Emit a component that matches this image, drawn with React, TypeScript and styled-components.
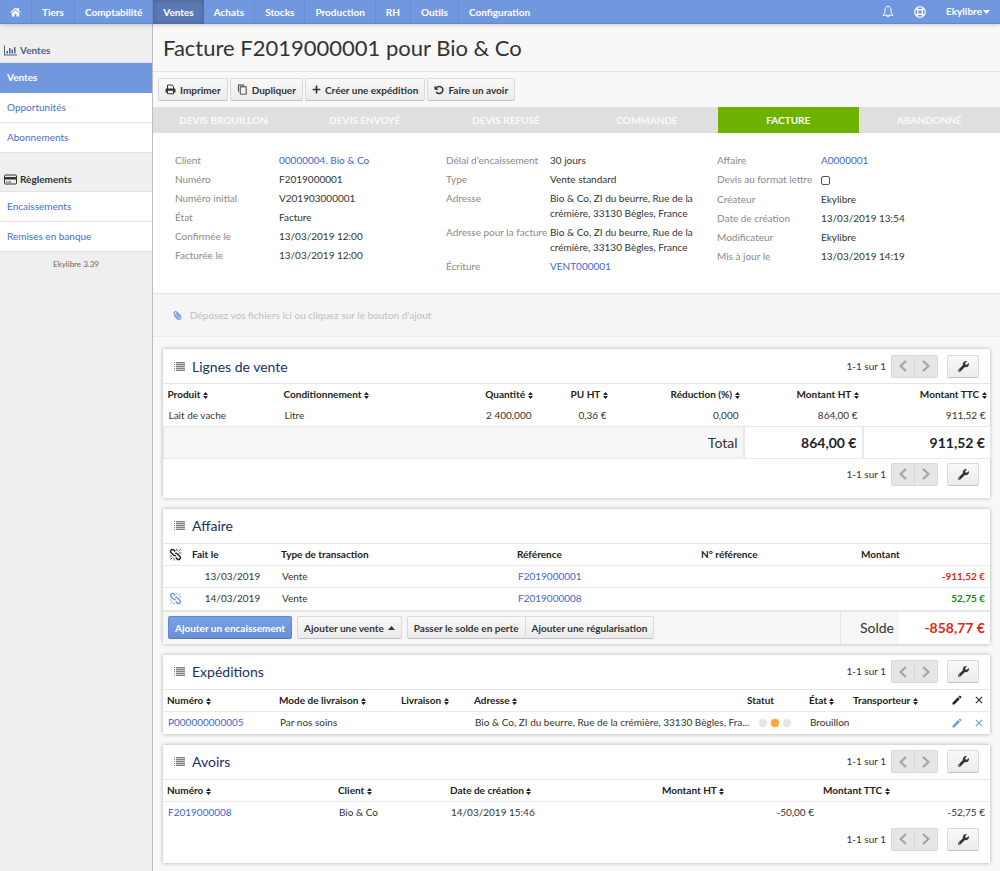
import React from 'react';
import styled, { createGlobalStyle, css } from 'styled-components';
import { FaWrench, FaPaperclip, FaPlus, FaRegLifeRing } from 'react-icons/fa';
import { MdEdit, MdClose, MdContentCopy } from 'react-icons/md';

const GlobalStyle = createGlobalStyle`
  *, *::before, *::after { box-sizing: border-box; }
  body {
    margin: 0;
    background: #f8f8f8;
    color: #333;
    font-family: Lato, "Liberation Sans", sans-serif;
    font-size: 10px;
    line-height: 15px;
  }
  a { text-decoration: none; }
  button { font-family: inherit; }
  h1, h2, h3, ul, dl, dd { margin: 0; padding: 0; }
`;

const Shell = styled.div`
  display: flex;
  flex-direction: column;
  min-height: 100vh;
`;

/* Top bar */
const TopBar = styled.nav`
  display: flex;
  height: 24px;
  background: #7198de;
  border-bottom: 1px solid #6288cc;
  box-shadow: 0 1px 4px rgba(0, 0, 0, 0.2);
  z-index: 1;
`;

const NavLink = styled.a<{ $active?: boolean }>`
  display: flex;
  align-items: center;
  padding: 0 10px;
  height: 24px;
  color: #fff;
  font-weight: 700;
  border-right: 1px solid #678dd4;
  ${p => p.$active && css`
    background: #5b7ab5;
    border-right: 0;
    box-shadow: inset 0 0 5px rgba(0, 0, 0, 0.25);
  `}
  &:last-of-type { border-right: 0; }
`;

const TopTools = styled.div`
  display: flex;
  align-items: center;
  gap: 20px;
  margin-left: auto;
  padding-right: 10px;
  color: #fff;
`;

const ToolLink = styled.a`
  display: flex;
  align-items: center;
  gap: 1px;
  color: #fff;
  font-weight: 700;
`;

const Body = styled.div`
  display: flex;
  flex: 1;
`;

/* Sidebar */
const Sidebar = styled.aside`
  flex: 0 0 153px;
  background: #efefef;
  border-right: 1px solid #bdbdbd;
`;

const SideTitle = styled.h2<{ $current?: boolean }>`
  display: flex;
  align-items: flex-end;
  gap: 3px;
  height: 39px;
  padding: 0 4px 4px;
  border-bottom: 1px solid #e2e2e2;
  font-size: 10px;
  line-height: 15px;
  color: ${p => (p.$current ? '#4d5f88' : '#333')};
  svg { margin-bottom: 2px; }
`;

const SideList = styled.ul`
  list-style: none;
`;

const SideLink = styled.a<{ $active?: boolean }>`
  display: flex;
  align-items: center;
  height: 30px;
  padding: 0 7px;
  background: ${p => (p.$active ? '#7198de' : '#fff')};
  color: ${p => (p.$active ? '#fff' : '#3d6fd0')};
  border-bottom: 1px solid ${p => (p.$active ? '#7198de' : '#e2e2e2')};
  font-weight: ${p => (p.$active ? 700 : 400)};
`;

const Version = styled.p`
  margin: 5px 0 0;
  font-size: 8px;
  text-align: center;
  color: #666;
`;

/* Main column */
const Main = styled.main`
  flex: 1;
  min-width: 0;
`;

const Title = styled.h1`
  padding: 10px;
  border-bottom: 1px solid #e4e4e4;
  font-size: 22px;
  line-height: 27px;
  font-weight: 400;
`;

const Toolbar = styled.div`
  display: flex;
  gap: 2px;
  padding: 6px 5px;
`;

const Button = styled.button<{ $primary?: boolean }>`
  display: inline-flex;
  align-items: center;
  gap: 4px;
  height: 23px;
  padding: 0 6px;
  border: 1px solid ${p => (p.$primary ? '#6288cc' : '#dadada')};
  border-bottom-color: ${p => (p.$primary ? '#5578b8' : '#c2c2c2')};
  border-radius: 2px;
  background: ${p =>
    p.$primary ? 'linear-gradient(#7aa0e4, #6890d8)' : 'linear-gradient(#f9f9f9, #ebebeb)'};
  color: ${p => (p.$primary ? '#fff' : '#333')};
  font-size: 10px;
  font-weight: 700;
  white-space: nowrap;
`;

const Steps = styled.ul`
  display: grid;
  grid-template-columns: repeat(6, 1fr);
  list-style: none;
`;

const Step = styled.li<{ $current?: boolean }>`
  padding: 6px 0 5px;
  text-align: center;
  font-weight: 700;
  text-transform: uppercase;
  background: ${p => (p.$current ? '#6eb200' : '#dfdfdf')};
  color: ${p => (p.$current ? '#fff' : '#fafafa')};
`;

const Info = styled.section`
  display: grid;
  grid-template-columns: repeat(3, 1fr);
  padding: 20px 12px 19px 22px;
  background: #fff;
`;

const InfoList = styled.dl`
  display: flex;
  flex-direction: column;
  gap: 4px;
`;

const InfoRow = styled.div`
  display: grid;
  grid-template-columns: 104px 1fr;
  dt { color: #8a8a8a; white-space: nowrap; }
`;

const TextLink = styled.a`
  color: #4466d0;
`;

const IconLink = styled.a`
  color: #7198de;
`;

const CheckBox = styled.input`
  appearance: none;
  display: block;
  width: 9px;
  height: 9px;
  margin: 4px 0 3px;
  border: 1px solid #555;
  border-radius: 2px;
  background: #fff;
`;

const DropZone = styled.section`
  display: flex;
  align-items: center;
  gap: 8px;
  height: 44px;
  padding: 0 20px;
  border-top: 1px solid #e4e4e4;
  border-bottom: 1px solid #ececec;
  background: #f5f5f5;
  color: #bdbdbd;
  svg { color: #7198de; transform: scaleX(-1); }
`;

/* Cards */
const Cards = styled.div`
  display: flex;
  flex-direction: column;
  gap: 11px;
  padding: 12px 10px 8px;
`;

const Card = styled.section`
  background: #fff;
  box-shadow: 0 0 4px rgba(0, 0, 0, 0.3);
`;

const CardHead = styled.header`
  display: flex;
  align-items: center;
  height: 35px;
  padding: 0 11px;
  border-bottom: 1px solid #e4e4e4;
`;

const CardTitle = styled.h3`
  margin-left: 7px;
  font-size: 14px;
  font-weight: 400;
  color: #1c2f66;
`;

const CardFoot = styled.footer`
  display: flex;
  padding: 4px 11px 12px;
`;

const PagerBox = styled.div`
  display: flex;
  align-items: center;
  margin-left: auto;
`;

const PagerGroup = styled.div`
  display: flex;
  margin: 0 9px 0 5px;
`;

const PagerButton = styled.button`
  display: flex;
  align-items: center;
  justify-content: center;
  width: 24px;
  height: 23px;
  padding: 0;
  border: 1px solid #d8d8d8;
  background: #e6e6e6;
  color: #a2a2a2;
  &:first-child { border-radius: 2px 0 0 2px; }
  &:last-child { width: 23px; border-left: 0; border-radius: 0 2px 2px 0; }
`;

const ToolButton = styled(Button)`
  justify-content: center;
  width: 32px;
`;

const Table = styled.table<{ $rowHeight?: number }>`
  width: 100%;
  table-layout: fixed;
  border-collapse: collapse;
  th, tbody td { height: ${p => p.$rowHeight ?? 22}px; }
`;

type Align = 'left' | 'right' | 'center';

const Th = styled.th<{ $w: number; $align?: Align }>`
  width: ${p => p.$w}px;
  padding: 0 4px;
  text-align: ${p => p.$align ?? 'left'};
  font-weight: 700;
  white-space: nowrap;
  color: #222;
  svg { vertical-align: middle; }
`;

const IconTh = styled(Th)`
  padding: 0;
  text-align: center;
  svg { display: block; margin: 0 auto; }
`;

const Row = styled.tr`
  border-top: 1px solid #ececec;
`;

const PlainRow = styled.tr``;

const Td = styled.td<{ $align?: Align; $tone?: 'neg' | 'pos' }>`
  padding: 0 5px;
  text-align: ${p => p.$align ?? 'left'};
  white-space: nowrap;
  ${p => p.$tone && css`
    font-weight: 700;
    color: ${p.$tone === 'neg' ? '#e02a10' : '#118411'};
  `}
`;

const IconTd = styled.td`
  padding: 0;
  text-align: center;
  svg { display: block; margin: 0 auto; }
`;

const TotalRow = styled.tr`
  border: 1px solid #e9e9e9;
  td {
    height: 32px;
    padding: 0 5px;
    font-size: 14px;
    text-align: right;
    white-space: nowrap;
    border-left: 2px solid #e9e9e9;
    font-weight: 700;
    color: #222;
  }
  td:first-child { background: #f6f6f6; font-weight: 400; color: #333; border-left: 0; }
`;

const BalanceBar = styled.footer`
  display: flex;
  height: 34px;
  border-top: 2px solid #e6e6e6;
  background: #f6f6f6;
`;

const BalanceActions = styled.div`
  display: flex;
  flex: 1;
  align-items: center;
  gap: 5px;
  padding-left: 5px;
`;

const ButtonPair = styled.div`
  display: flex;
  button:first-child { border-radius: 2px 0 0 2px; }
  button:last-child { border-left: 0; border-radius: 0 2px 2px 0; }
`;

const BalanceLabel = styled.div`
  display: flex;
  align-items: center;
  justify-content: flex-end;
  width: 59px;
  padding-right: 5px;
  border-left: 1px solid #e6e6e6;
  font-size: 14px;
`;

const BalanceValue = styled.div`
  display: flex;
  align-items: center;
  justify-content: flex-end;
  width: 91px;
  padding-right: 5px;
  background: #fff;
  color: #e02a10;
  font-size: 14px;
  font-weight: 700;
`;

const Dots = styled.div`
  display: flex;
  justify-content: center;
  gap: 4px;
  padding-left: 2px;
`;

const Dot = styled.span<{ $on?: boolean }>`
  width: 8px;
  height: 8px;
  border-radius: 50%;
  background: ${p => (p.$on ? '#fda63a' : '#e6e6e6')};
  box-shadow: ${p => (p.$on ? '0 0 3px #fdc680' : 'none')};
`;

/* Icons */
const HomeIcon = () => (
  <svg width="11" height="10" viewBox="0 0 22 20" fill="#fff" aria-hidden="true">
    <path d="M11 1 0.5 10l1.5 1.7L11 4l9 7.7 1.5-1.7-3.5-3V2h-3v2.4z" />
    <path d="M11 6l-7.5 6.4V19h5.500v-5h4v5h5.500v-6.600z" />
  </svg>
);
const BellIcon = () => (
  <svg width="12" height="13" viewBox="0 0 24 26" fill="none" stroke="#fff" strokeWidth="1.9" aria-hidden="true">
    <path d="M12 3c-4.500 0-6 3.500-6 7 0 6-2 8-4 10.500h20c-2-2.500-4-4.500-4-10.500 0-3.500-1.500-7-6-7z" strokeLinejoin="round" />
    <path d="M12 1v2M9.500 21c0 1.600 1 2.500 2.500 2.500s2.500-.9 2.500-2.500" />
  </svg>
);
const CaretDown = () => (
  <svg width="7" height="4" viewBox="0 0 7 4" fill="currentColor" aria-hidden="true"><path d="M0 0h7L3.500 4z" /></svg>
);
const CaretUp = () => (
  <svg width="7" height="4" viewBox="0 0 7 4" fill="currentColor" aria-hidden="true"><path d="M0 4h7L3.500 0z" /></svg>
);
const ChartIcon = () => (
  <svg width="13" height="11" viewBox="0 0 26 22" fill="currentColor" aria-hidden="true">
    <path d="M0 1h2v18h24v2H0zM5 12h3v5H5zM10 6h3v11h-3zM15 9h3v8h-3zM20 4h3v13h-3z" />
  </svg>
);
const CardIcon = () => (
  <svg width="13" height="11" viewBox="0 0 26 22" aria-hidden="true">
    <rect x="1" y="2" width="24" height="18" rx="2" fill="none" stroke="#333" strokeWidth="2" />
    <path d="M1 6h24v5H1zM4 15h3v2H4zM9 15h5v2H9z" fill="#333" />
  </svg>
);
const PrintIcon = () => (
  <svg width="11" height="11" viewBox="0 0 22 22" aria-hidden="true">
    <path d="M5 10V2h9l3 3v5" fill="none" stroke="#333" strokeWidth="2" />
    <path d="M1 11.500C1 10 2 9 3.500 9h15c1.500 0 2.500 1 2.500 2.500V17h-3.500v-3.500h-13V17H1z" fill="#333" />
    <path d="M5 13.500v6h12v-6" fill="none" stroke="#333" strokeWidth="2" />
  </svg>
);
const UndoIcon = () => (
  <svg width="10" height="10" viewBox="0 0 20 20" aria-hidden="true">
    <path d="M4 5.500C6 3.500 8 2.800 10.500 2.800a7.200 7.200 0 1 1-6 11.200" fill="none" stroke="#333" strokeWidth="3" />
    <path d="M1 1v8.500h8.500z" fill="#333" />
  </svg>
);
const UnlinkIcon = () => (
  <svg width="13" height="13" viewBox="0 0 26 26" fill="none" stroke="currentColor" aria-hidden="true">
    <path d="M12.500 7 10 4.300C8.300 2.600 6 2.600 4.400 4.100S2.700 7.800 4.400 9.500l5.200 5c1.400 1.200 2.900 1.300 4.300.4" strokeWidth="3" />
    <path d="M13.500 19l2.500 2.700c1.700 1.700 4 1.700 5.600.2s1.700-3.700 0-5.400l-5.200-5c-1.400-1.200-2.900-1.300-4.300-.4" strokeWidth="3" />
    <path d="M16 1v5M19 7l4.500-4.500M20 10h5M10 20v5M7 19l-4.500 4.500M6 16H1" strokeWidth="1.500" />
  </svg>
);
const ListIcon = () => (
  <svg width="11" height="9" viewBox="0 0 11 9" fill="#808080" aria-hidden="true">
    <path d="M0 0h1v1H0zM2 0h9v1H2zM0 2h1v1H0zM2 2h9v1H2zM0 4h1v1H0zM2 4h9v1H2zM0 6h1v1H0zM2 6h9v1H2zM0 8h1v1H0zM2 8h9v1H2z" />
    <path d="M2 0h9v9H2z" opacity="0.4" />
  </svg>
);
const SortIcon = () => (
  <svg width="5" height="7" viewBox="0 0 10 14" fill="#222" aria-hidden="true"><path d="M0 6l5-6 5 6zM0 8h10l-5 6z" /></svg>
);
const Chevron = ({ right }: { right?: boolean }) => (
  <svg width="8" height="12" viewBox="0 0 8 12" fill="none" stroke="currentColor" strokeWidth="2" aria-hidden="true">
    <path d={right ? 'M1 1l5.500 5L1 11' : 'M7 1L1.500 6 7 11'} />
  </svg>
);

const Sorted = ({ children }: { children: string }) => (
  <>{children} <SortIcon /></>
);

const Pager = () => (
  <PagerBox>
    <span>1-1 sur 1</span>
    <PagerGroup>
      <PagerButton type="button" aria-label="Page précédente"><Chevron /></PagerButton>
      <PagerButton type="button" aria-label="Page suivante"><Chevron right /></PagerButton>
    </PagerGroup>
    <ToolButton type="button" aria-label="Options"><FaWrench size={11} /></ToolButton>
  </PagerBox>
);

const Heading = ({ title, pager }: { title: string; pager?: boolean }) => (
  <CardHead>
    <ListIcon />
    <CardTitle>{title}</CardTitle>
    {pager && <Pager />}
  </CardHead>
);

const modules = ['Tiers', 'Comptabilité', 'Ventes', 'Achats', 'Stocks', 'Production', 'RH', 'Outils', 'Configuration'];
const steps = ['Devis brouillon', 'Devis envoyé', 'Devis refusé', 'Commande', 'Facture', 'Abandonné'];
const address = 'Bio & Co, ZI du beurre, Rue de la crémière, 33130 Bègles, France';

const info: [string, React.ReactNode][][] = [
  [
    ['Client', <TextLink href="#client">00000004. Bio &amp; Co</TextLink>],
    ['Numéro', 'F2019000001'],
    ['Numéro initial', 'V201903000001'],
    ['État', 'Facture'],
    ['Confirmée le', '13/03/2019 12:00'],
    ['Facturée le', '13/03/2019 12:00'],
  ],
  [
    ['Délai d’encaissement', '30 jours'],
    ['Type', 'Vente standard'],
    ['Adresse', address],
    ['Adresse pour la facture', address],
    ['Écriture', <TextLink href="#ecriture">VENT000001</TextLink>],
  ],
  [
    ['Affaire', <TextLink href="#affaire">A0000001</TextLink>],
    ['Devis au format lettre', <CheckBox type="checkbox" id="letter" aria-label="Devis au format lettre" />],
    ['Créateur', 'Ekylibre'],
    ['Date de création', '13/03/2019 13:54'],
    ['Modificateur', 'Ekylibre'],
    ['Mis à jour le', '13/03/2019 14:19'],
  ],
];

export default function App() {
  return (
    <Shell>
      <GlobalStyle />
      <TopBar>
        <NavLink href="#home" aria-label="Accueil"><HomeIcon /></NavLink>
        {modules.map(m => (
          <NavLink key={m} href={`#${m}`} $active={m === 'Ventes'}>{m}</NavLink>
        ))}
        <TopTools>
          <ToolLink href="#notifications" aria-label="Notifications"><BellIcon /></ToolLink>
          <ToolLink href="#help" aria-label="Aide"><FaRegLifeRing size={12} /></ToolLink>
          <ToolLink href="#user">Ekylibre<CaretDown /></ToolLink>
        </TopTools>
      </TopBar>
      <Body>
        <Sidebar>
          <SideTitle $current><ChartIcon />Ventes</SideTitle>
          <SideList>
            <li><SideLink href="#ventes" $active>Ventes</SideLink></li>
            <li><SideLink href="#opportunites">Opportunités</SideLink></li>
            <li><SideLink href="#abonnements">Abonnements</SideLink></li>
          </SideList>
          <SideTitle><CardIcon />Règlements</SideTitle>
          <SideList>
            <li><SideLink href="#encaissements">Encaissements</SideLink></li>
            <li><SideLink href="#remises">Remises en banque</SideLink></li>
          </SideList>
          <Version>Ekylibre 3.39</Version>
        </Sidebar>
        <Main>
          <Title>Facture F2019000001 pour Bio &amp; Co</Title>
          <Toolbar>
            <Button type="button"><PrintIcon />Imprimer</Button>
            <Button type="button"><MdContentCopy size={11} />Dupliquer</Button>
            <Button type="button"><FaPlus size={9} />Créer une expédition</Button>
            <Button type="button"><UndoIcon />Faire un avoir</Button>
          </Toolbar>
          <Steps>
            {steps.map(s => <Step key={s} $current={s === 'Facture'}>{s}</Step>)}
          </Steps>
          <Info>
            {info.map((rows, i) => (
              <InfoList key={i}>
                {rows.map(([label, value]) => (
                  <InfoRow key={label}>
                    <dt>{label}</dt>
                    <dd>{value}</dd>
                  </InfoRow>
                ))}
              </InfoList>
            ))}
          </Info>
          <DropZone>
            <FaPaperclip size={9} />
            Déposez vos fichiers ici ou cliquez sur le bouton d’ajout
          </DropZone>
          <Cards>
            <Card>
              <Heading title="Lignes de vente" pager />
              <Table $rowHeight={21}>
                <thead>
                  <tr>
                    <Th $w={116}><Sorted>Produit</Sorted></Th>
                    <Th $w={188}><Sorted>Conditionnement</Sorted></Th>
                    <Th $w={69} $align="right"><Sorted>Quantité</Sorted></Th>
                    <Th $w={75} $align="right"><Sorted>PU HT</Sorted></Th>
                    <Th $w={132} $align="right"><Sorted>Réduction (%)</Sorted></Th>
                    <Th $w={119} $align="right"><Sorted>Montant HT</Sorted></Th>
                    <Th $w={128} $align="right"><Sorted>Montant TTC</Sorted></Th>
                  </tr>
                </thead>
                <tbody>
                  <PlainRow>
                    <Td>Lait de vache</Td>
                    <Td>Litre</Td>
                    <Td $align="right">2 400,000</Td>
                    <Td $align="right">0,36 €</Td>
                    <Td $align="right">0,000</Td>
                    <Td $align="right">864,00 €</Td>
                    <Td $align="right">911,52 €</Td>
                  </PlainRow>
                </tbody>
                <tfoot>
                  <TotalRow>
                    <td colSpan={5}>Total</td>
                    <td>864,00 €</td>
                    <td>911,52 €</td>
                  </TotalRow>
                </tfoot>
              </Table>
              <CardFoot><Pager /></CardFoot>
            </Card>
            <Card>
              <Heading title="Affaire" />
              <Table>
                <thead>
                  <tr>
                    <IconTh $w={25}><UnlinkIcon /></IconTh>
                    <Th $w={89}>Fait le</Th>
                    <Th $w={236}>Type de transaction</Th>
                    <Th $w={184}>Référence</Th>
                    <Th $w={160}>N° référence</Th>
                    <Th $w={133}>Montant</Th>
                  </tr>
                </thead>
                <tbody>
                  <Row>
                    <IconTd />
                    <Td $align="center">13/03/2019</Td>
                    <Td>Vente</Td>
                    <Td><TextLink href="#F2019000001">F2019000001</TextLink></Td>
                    <Td />
                    <Td $align="right" $tone="neg">-911,52 €</Td>
                  </Row>
                  <Row>
                    <IconTd><IconLink href="#detach" aria-label="Détacher"><UnlinkIcon /></IconLink></IconTd>
                    <Td $align="center">14/03/2019</Td>
                    <Td>Vente</Td>
                    <Td><TextLink href="#F2019000008">F2019000008</TextLink></Td>
                    <Td />
                    <Td $align="right" $tone="pos">52,75 €</Td>
                  </Row>
                </tbody>
              </Table>
              <BalanceBar>
                <BalanceActions>
                  <Button type="button" $primary>Ajouter un encaissement</Button>
                  <Button type="button">Ajouter une vente <CaretUp /></Button>
                  <ButtonPair>
                    <Button type="button">Passer le solde en perte</Button>
                    <Button type="button">Ajouter une régularisation</Button>
                  </ButtonPair>
                </BalanceActions>
                <BalanceLabel>Solde</BalanceLabel>
                <BalanceValue>-858,77 €</BalanceValue>
              </BalanceBar>
            </Card>
            <Card>
              <Heading title="Expéditions" pager />
              <Table>
                <thead>
                  <tr>
                    <Th $w={112}><Sorted>Numéro</Sorted></Th>
                    <Th $w={122}><Sorted>Mode de livraison</Sorted></Th>
                    <Th $w={73}><Sorted>Livraison</Sorted></Th>
                    <Th $w={273}><Sorted>Adresse</Sorted></Th>
                    <Th $w={62}>Statut</Th>
                    <Th $w={44}><Sorted>État</Sorted></Th>
                    <Th $w={96}><Sorted>Transporteur</Sorted></Th>
                    <IconTh $w={23}><MdEdit size={12} /></IconTh>
                    <IconTh $w={22}><MdClose size={12} /></IconTh>
                  </tr>
                </thead>
                <tbody>
                  <Row>
                    <Td><TextLink href="#P000000000005">P000000000005</TextLink></Td>
                    <Td>Par nos soins</Td>
                    <Td />
                    <Td>Bio &amp; Co, ZI du beurre, Rue de la crémière, 33130 Bègles, Fra...</Td>
                    <Td><Dots><Dot /><Dot $on /><Dot /></Dots></Td>
                    <Td>Brouillon</Td>
                    <Td />
                    <IconTd><IconLink href="#edit" aria-label="Modifier"><MdEdit size={12} /></IconLink></IconTd>
                    <IconTd><IconLink href="#delete" aria-label="Supprimer"><MdClose size={12} /></IconLink></IconTd>
                  </Row>
                </tbody>
              </Table>
            </Card>
            <Card>
              <Heading title="Avoirs" pager />
              <Table>
                <thead>
                  <tr>
                    <Th $w={171}><Sorted>Numéro</Sorted></Th>
                    <Th $w={112}><Sorted>Client</Sorted></Th>
                    <Th $w={212}><Sorted>Date de création</Sorted></Th>
                    <Th $w={161}><Sorted>Montant HT</Sorted></Th>
                    <Th $w={171}><Sorted>Montant TTC</Sorted></Th>
                  </tr>
                </thead>
                <tbody>
                  <Row>
                    <Td><TextLink href="#avoir">F2019000008</TextLink></Td>
                    <Td>Bio &amp; Co</Td>
                    <Td>14/03/2019 15:46</Td>
                    <Td $align="right">-50,00 €</Td>
                    <Td $align="right">-52,75 €</Td>
                  </Row>
                </tbody>
              </Table>
              <CardFoot><Pager /></CardFoot>
            </Card>
          </Cards>
        </Main>
      </Body>
    </Shell>
  );
}
